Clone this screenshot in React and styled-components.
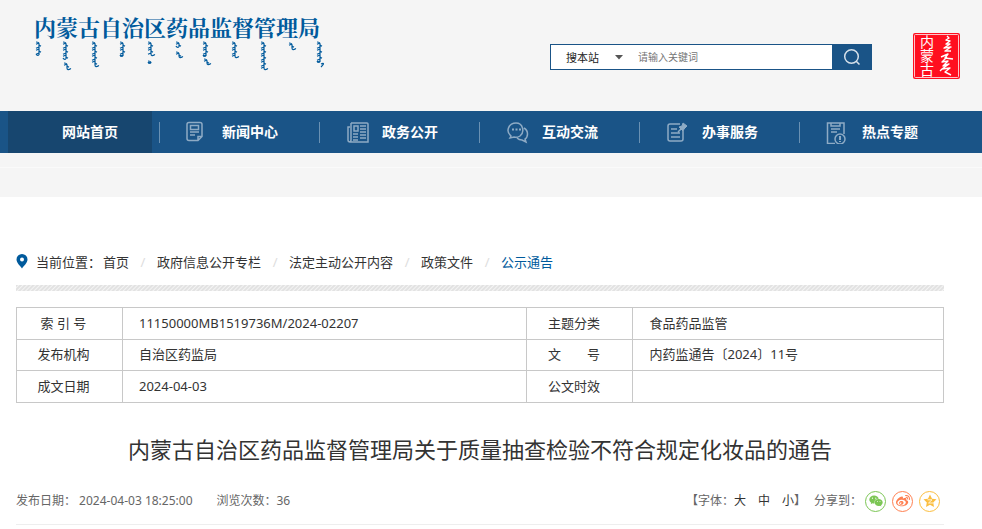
import React, { useState } from "react";
import styled, { createGlobalStyle } from "styled-components";
import { FaWeixin, FaWeibo } from "react-icons/fa";

const GlobalStyle = createGlobalStyle`
	* {
		box-sizing: border-box;
	}

	body {
		margin: 0;
		background: #fff;
		color: #333;
		font-family: "Noto Sans", "Noto Sans CJK SC", sans-serif;
		font-size: 13px;
		line-height: 20px;
	}

	a {
		color: inherit;
		text-decoration: none;
	}
`;

const Top = styled.div`
	height: 197px;
	background: #f5f5f5;
`;

const Header = styled.header`
	display: flex;
	justify-content: space-between;
	height: 111px;
	padding: 13px 22px 0 34px;
`;

const Logo = styled.a`
	display: block;
	color: #005a9c;
`;

const LogoName = styled.h1`
	margin: 0;
	font-family: "Noto Serif CJK SC", "Noto Sans CJK SC", serif;
	font-size: 22px;
	font-weight: 700;
	line-height: 28px;
	white-space: nowrap;
`;

const LogoScript = styled.svg`
	display: block;
	width: 290px;
	height: 32px;
`;

const Tools = styled.div`
	display: flex;
	align-items: flex-start;
	gap: 41px;
	padding-top: 20px;
`;

const Search = styled.form`
	display: flex;
	width: 322px;
	height: 26px;
	margin-top: 11px;
	border: 1px solid #1a5487;
	background: #fff;
`;

const Scope = styled.label`
	display: flex;
	align-items: center;
	width: 84px;
	padding-left: 15px;
`;

const ScopeSelect = styled.select`
	width: 48px;
	padding: 0;
	border: none;
	background: none;
	color: #222;
	font-family: inherit;
	font-size: 11px;
	appearance: none;
	outline: none;
`;

const Keyword = styled.input`
	flex: 1;
	min-width: 0;
	padding: 0 3px;
	border: none;
	color: #333;
	font-family: inherit;
	font-size: 10px;
	outline: none;

	&::placeholder {
		color: #757575;
	}
`;

const SearchButton = styled.button`
	display: flex;
	align-items: center;
	justify-content: center;
	width: 39px;
	padding: 0;
	border: none;
	background: #1a5487;
	cursor: pointer;
`;

const Nav = styled.nav`
	display: flex;
	height: 42px;
	background: #1a5487;
	overflow: hidden;
`;

const NavItem = styled.div`
	display: flex;
	align-items: center;
	flex: none;
	width: 160px;
	padding-left: 8px;

	&:not(:last-child)::after {
		content: "";
		width: 1px;
		height: 21px;
		margin-left: 7px;
		background: #6a91b3;
	}
`;

const NavLink = styled.a`
	display: flex;
	align-items: center;
	width: 144px;
	height: 42px;
	padding-left: 18px;
	background: ${props => (props.$active ? "#17466f" : "transparent")};
	color: #fff;
	font-size: 14px;
	font-weight: 700;
`;

const NavIcon = styled.svg`
	width: 24px;
	height: 24px;
	margin-right: 12px;
	fill: none;
	stroke: #8eabc5;
	stroke-width: 1.5;
`;

const SubBar = styled.div`
	height: 15px;
	border-bottom: 1px solid #fafafa;
`;

const Main = styled.main`
	padding: 52px 38px 0 16px;
`;

const Crumbs = styled.nav`
	display: flex;
	align-items: center;
	height: 26px;
`;

const CrumbLabel = styled.span`
	margin: 0 2px 0 8px;
`;

const Crumb = styled.a`
	color: ${props => (props.$current ? "#005a9c" : "#333")};

	&:not(:last-child)::after {
		content: "/";
		display: inline-block;
		width: 28px;
		color: #ddd;
		text-align: center;
	}
`;

const Stripe = styled.div`
	height: 6px;
	margin: 10px 0 16px;
	background: repeating-linear-gradient(
		135deg,
		#e2e2e2 0,
		#e2e2e2 1px,
		#f4f4f4 2px,
		#e2e2e2 3px
	);
`;

const InfoTable = styled.table`
	width: 100%;
	border-collapse: collapse;
	table-layout: fixed;

	th,
	td {
		height: 32px;
		border: 1px solid #c8c8c8;
		font-weight: 400;
	}

	tr:nth-child(2) > * {
		height: 31px;
	}

	th {
		padding: 0 12px 2px 0;
		text-align: center;
		white-space: pre;
	}

	td {
		padding: 0 16px 2px;
		text-align: left;
	}
`;

const InfoCol = styled.col`
	width: ${props => props.$width};
`;

const Title = styled.h2`
	margin: 29px 0 0;
	color: #333;
	font-size: 22px;
	font-weight: 400;
	line-height: 34px;
	text-align: center;
`;

const Meta = styled.div`
	display: flex;
	align-items: center;
	justify-content: space-between;
	height: 59px;
	padding: 12px 4px 0 0;
	border-bottom: 1px solid #eee;
	color: #666;
	font-size: 12px;
`;

const MetaGroup = styled.div`
	display: flex;
	align-items: center;
	gap: ${props => props.$gap}px;
`;

const FontSizes = styled.div`
	display: flex;
	align-items: center;
`;

const SizeButton = styled.button`
	padding: 0;
	border: none;
	background: none;
	color: #333;
	font-family: inherit;
	font-size: 12px;
	line-height: 20px;
	cursor: pointer;

	& + & {
		margin-left: 12px;
	}
`;

const Share = styled.div`
	display: flex;
	align-items: center;
	gap: 6px;
`;

const ShareLink = styled.a`
	display: flex;
	align-items: center;
	justify-content: center;
	width: 21px;
	height: 21px;
	border: 1px solid ${props => props.$color};
	border-radius: 50%;
	color: ${props => props.$color};
	font-size: 14px;
`;

const ShareLabel = styled.span`
	margin-right: -3px;
`;

const SealText = styled.text`
	fill: #fff;
	font-family: "Noto Sans CJK SC", sans-serif;
	font-size: 14px;
	writing-mode: vertical-rl;
`;

// x is the column, y and h its vertical run, tail draws the last flick
const scriptWords = [
	{ x: 5, y: 1, h: 13 },
	{ x: 32, y: 1, h: 17 },
	{ x: 33, y: 22, h: 5, tail: true },
	{ x: 61, y: 1, h: 23, tail: true },
	{ x: 89, y: 1, h: 14 },
	{ x: 117, y: 1, h: 12, tail: true },
	{ x: 117, y: 20, h: 2 },
	{ x: 145, y: 1, h: 5 },
	{ x: 145, y: 11, h: 4, tail: true },
	{ x: 172, y: 1, h: 14 },
	{ x: 173, y: 18, h: 4, tail: true },
	{ x: 201, y: 1, h: 14, tail: true },
	{ x: 230, y: 1, h: 26, tail: true },
	{ x: 258, y: 2, h: 5, tail: true },
	{ x: 286, y: 1, h: 20 }
];

const scriptPath = ({ x, y, h, tail }) => {
	let d = `M${x - 3} ${y}q3 0 3 2V${y + h}`;
	for (let i = 1; i < h; i += 2) {
		d += `M${x} ${y + i}l${i % 6 === 3 ? 2 : -3} 1.2`;
	}
	return d + (tail ? `M${x} ${y + h}q0 3 4 .5` : `M${x} ${y + h}q-2 1-3-1`);
};

const navItems = [
	{ label: "网站首页", active: true },
	{
		label: "新闻中心",
		icon: (
			<path d="M3 2.500h11q2 0 2 2v12l-4 4H3q-2 0-2-2v-14q0-2 2-2zM12 20.500v-4h4M4.500 5.500h8v4h-8zM4 12h9M4 15h5" />
		)
	},
	{
		label: "政务公开",
		icon: (
			<path d="M5 3h16q1 0 1 1v18H4q-2 0-2-2V7h2M5 3v17q0 2-2 2M8 6h4v5H8zM14 6h6M14 9h6M14 12h6M7 14h5M14 15h6M7 17h5M14 18h6M7 20h5" />
		)
	},
	{
		label: "互动交流",
		icon: (
			<>
				<path d="M5 16l-1 2 4-1q3 1 6-1c5-4 3-13-4-13S-1 11 5 16zM18 8c5 3 4 9 1 11l1 3-4-2q-3 0-5-2" />
				<path d="M6 9.500h2M9.500 9.500h2M13 9.500h2" strokeWidth="2" />
			</>
		)
	},
	{
		label: "办事服务",
		icon: (
			<>
				<path d="M14 4H4Q2 4 2 6v13q0 2 2 2h11q2 0 2-2v-8M5 9h6M5 13h9M5 17h9M12 12l4-4" />
				<path
					d="M17 3l4 3-1 1-2 2-1 2-4-4 3-1z"
					fill="#8eabc5"
					strokeWidth="1"
				/>
			</>
		)
	},
	{
		label: "热点专题",
		icon: (
			<>
				<path d="M9 23.500H1.500V3H18v11M5 3v3h9V3M5 9h9M5 12h6" />
				<circle cx="14" cy="19" r="5" />
				<path d="M14 16v4M14 21v1" strokeWidth="2" />
			</>
		)
	}
];

const crumbs = [
	"首页",
	"政府信息公开专栏",
	"法定主动公开内容",
	"政策文件",
	"公示通告"
];

const infoRows = [
	["索 引 号", "11150000MB1519736M/2024-02207", "主题分类", "食品药品监管"],
	["发布机构", "自治区药监局", "文　　号", "内药监通告〔2024〕11号"],
	["成文日期", "2024-04-03", "公文时效", ""]
];

const Seal = () => (
	<svg width="47" height="46" viewBox="0 0 47 46" role="img" aria-label="内蒙古">
		<rect width="47" height="46" rx="2" fill="#ff0f1f" />
		<rect
			x="1.5"
			y="1.5"
			width="44"
			height="43"
			rx="1"
			fill="none"
			stroke="#ffc4c8"
		/>
		<SealText x="14" y="2">内蒙古</SealText>
		<path
			d="M34 3l2 2-3 2 4 1-4 3 4 0-6 4 7-1-6 4 6 0M28 24l7-3-3 4 8 1M34 24l-5 5 6-1-5 5 6-2-7 5 8-1-5 4 6 3M29 36l-2 2"
			fill="none"
			stroke="#fff"
			strokeWidth="1.4"
			strokeLinejoin="round"
		/>
	</svg>
);

const QzoneIcon = () => (
	<svg width="14" height="14" viewBox="0 0 14 14" aria-hidden="true">
		<path
			d="M7 .5l2 4.200 4.500.6-3.300 3.100.8 4.600L7 10.800 3 13l.8-4.600L.5 5.300 5 4.700z"
			fill="currentColor"
		/>
		<path d="M4.500 5.800H9L5.500 9H10" fill="none" stroke="#fff" strokeWidth=".8" />
	</svg>
);

const SearchBar = () => {
	const [keyword, setKeyword] = useState("");

	return (
		<Search role="search" onSubmit={e => e.preventDefault()}>
			<Scope>
				<ScopeSelect aria-label="搜索范围">
					<option>搜本站</option>
				</ScopeSelect>
				<svg width="10" height="5" viewBox="0 0 10 5" aria-hidden="true">
					<path d="M1 0h8L5 4.500z" fill="#555" />
				</svg>
			</Scope>
			<Keyword
				type="text"
				aria-label="关键词"
				placeholder="请输入关键词"
				value={keyword}
				onChange={e => setKeyword(e.target.value)}
			/>
			<SearchButton type="submit" aria-label="搜索">
				<svg
					width="18"
					height="18"
					viewBox="0 0 18 18"
					fill="none"
					stroke="#d5e0ea"
					strokeWidth="1.5"
				>
					<circle cx="8.5" cy="8.5" r="6.8" />
					<path d="M13 13l3.500 3.500" />
				</svg>
			</SearchButton>
		</Search>
	);
};

const App = () => (
	<>
		<GlobalStyle />
		<Top>
			<Header>
				<Logo href="#">
					<LogoName>内蒙古自治区药品监督管理局</LogoName>
					<LogoScript viewBox="0 0 290 32" aria-hidden="true">
						<path
							d={scriptWords.map(scriptPath).join("")}
							fill="none"
							stroke="currentColor"
							strokeWidth="1.2"
						/>
						<path
							d="M287 23q5-2 0 3"
							fill="none"
							stroke="currentColor"
							strokeWidth="1.2"
						/>
					</LogoScript>
				</Logo>
				<Tools>
					<SearchBar />
					<Seal />
				</Tools>
			</Header>
			<Nav>
				{navItems.map(item => (
					<NavItem key={item.label}>
						<NavLink href="#" $active={item.active}>
							<NavIcon viewBox="0 0 24 24" aria-hidden="true">
								{item.icon}
							</NavIcon>
							{item.label}
						</NavLink>
					</NavItem>
				))}
			</Nav>
			<SubBar />
		</Top>

		<Main>
			<Crumbs>
				<svg width="12" height="16" viewBox="0 0 12 16" aria-hidden="true">
					<path
						d="M6 0a5.500 5.500 0 0 1 5.500 5.500C11.500 9 7.500 12 6 14.500 4.500 12 .5 9 .5 5.500A5.500 5.500 0 0 1 6 0z"
						fill="#005a9c"
					/>
					<circle cx="6" cy="5.4" r="2" fill="#fff" />
				</svg>
				<CrumbLabel>当前位置：</CrumbLabel>
				{crumbs.map((name, i) => (
					<Crumb key={name} href="#" $current={i === crumbs.length - 1}>
						{name}
					</Crumb>
				))}
			</Crumbs>
			<Stripe />

			<InfoTable>
				<colgroup>
					<InfoCol $width="106px" />
					<InfoCol $width="auto" />
					<InfoCol $width="106px" />
					<InfoCol $width="33.5%" />
				</colgroup>
				<tbody>
					{infoRows.map(([nameA, valueA, nameB, valueB]) => (
						<tr key={nameA}>
							<th scope="row">{nameA}</th>
							<td>{valueA}</td>
							<th scope="row">{nameB}</th>
							<td>{valueB}</td>
						</tr>
					))}
				</tbody>
			</InfoTable>

			<Title>内蒙古自治区药品监督管理局关于质量抽查检验不符合规定化妆品的通告</Title>

			<Meta>
				<MetaGroup $gap={24}>
					<span>发布日期： 2024-04-03 18:25:00</span>
					<span>浏览次数：36</span>
				</MetaGroup>
				<MetaGroup $gap={8}>
					<FontSizes>
						【字体：
						<SizeButton type="button">大</SizeButton>
						<SizeButton type="button">中</SizeButton>
						<SizeButton type="button">小</SizeButton>】
					</FontSizes>
					<Share>
						<ShareLabel>分享到：</ShareLabel>
						<ShareLink href="#" aria-label="微信" $color="#7cc655">
							<FaWeixin />
						</ShareLink>
						<ShareLink href="#" aria-label="微博" $color="#ff7f50">
							<FaWeibo />
						</ShareLink>
						<ShareLink href="#" aria-label="QQ空间" $color="#fbbe3f">
							<QzoneIcon />
						</ShareLink>
					</Share>
				</MetaGroup>
			</Meta>
		</Main>
	</>
);

export default App;
